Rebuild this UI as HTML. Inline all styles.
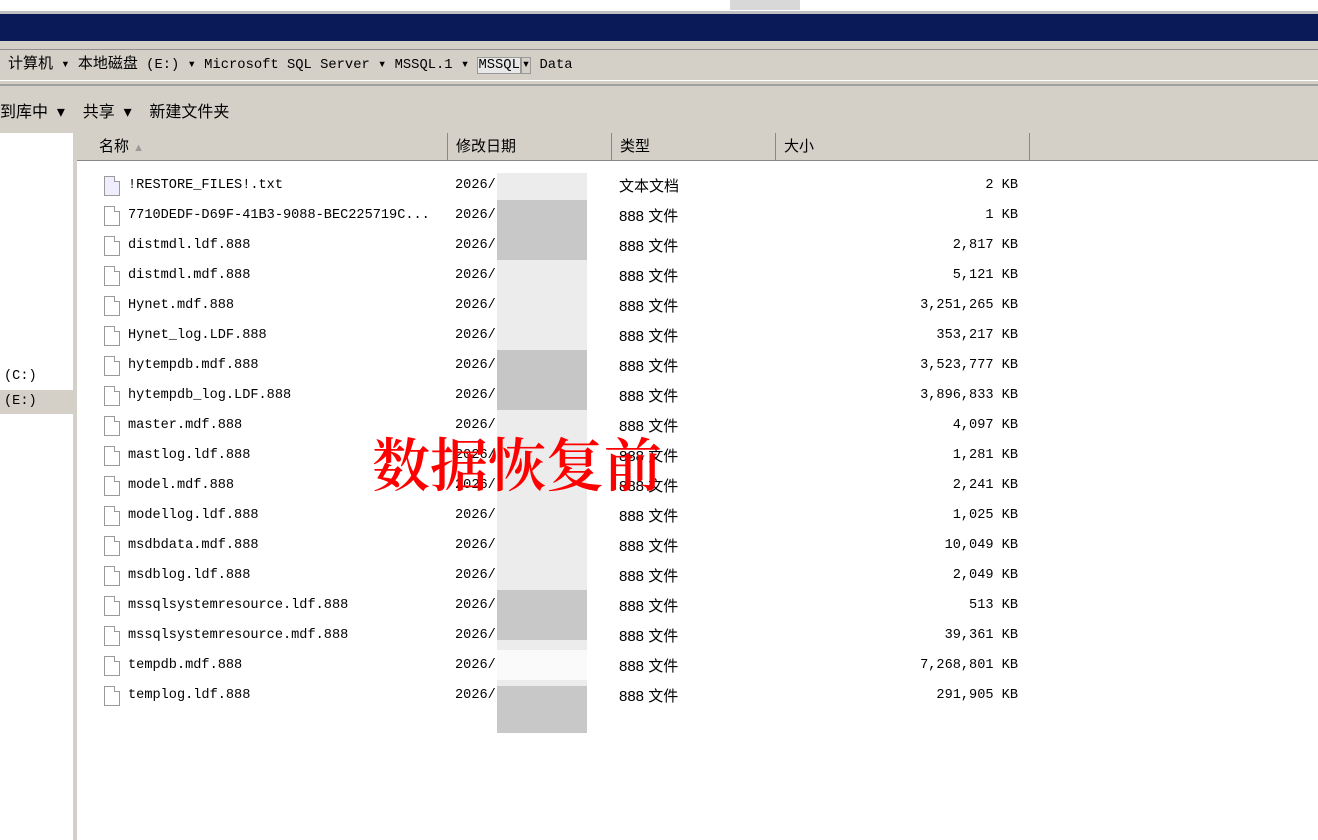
<!DOCTYPE html>
<html><head><meta charset="utf-8"><style>
body{margin:0;width:1318px;height:840px;overflow:hidden;background:#fff;position:relative;font-family:"Liberation Mono","Noto Sans CJK SC",monospace;font-size:13.6px;color:#000}
.a{position:absolute}
.cj{font-family:"Liberation Sans","Noto Sans CJK SC",sans-serif}
.row{position:absolute;left:0;width:1318px;height:30px}
.ic{position:absolute;left:104px;top:5px;width:14px;height:18px;border:1px solid #9a9a9a;background:#fff}
.ic:after{content:"";position:absolute;right:-1px;top:-1px;width:5px;height:5px;background:#fff;border-left:1px solid #9a9a9a;border-bottom:1px solid #9a9a9a}
.n{position:absolute;left:128px;top:7px}
.d{position:absolute;left:455px;top:7px}
.t{position:absolute;left:619px;top:4px;font-family:"Liberation Sans","Noto Sans CJK SC",sans-serif;font-size:15px}
.s{position:absolute;right:300px;top:7px}
.hd{position:absolute;top:133px;height:28px;background:#d4d0c8;border-right:1px solid #888;border-bottom:1px solid #888;font-family:"Liberation Sans","Noto Sans CJK SC",sans-serif;font-size:15px;line-height:28px;padding-left:8px;box-sizing:border-box}
</style></head><body>
<div class="a" style="left:0;top:0;width:1318px;height:11px;background:#fff"></div>
<div class="a" style="left:730px;top:0;width:70px;height:10px;background:#d8d8d8"></div>
<div class="a" style="left:0;top:11px;width:1318px;height:3px;background:#c0c0c0"></div>
<div class="a" style="left:0;top:14px;width:1318px;height:27px;background:#0a1a58"></div>
<div class="a" style="left:0;top:41px;width:1318px;height:92px;background:#d4d0c8"></div>
<div class="a" style="left:0;top:49px;width:1318px;height:30px;border-top:1px solid #909090;border-bottom:1px solid #fff;background:#d4d0c8"></div>
<div class="a" style="left:0;top:84px;width:1318px;height:2px;background:#a0a0a0"></div>
<div class="a" style="left:8px;top:52px;font-size:13.8px"><span class="cj" style="font-size:15px">计算机</span> ▾ <span class="cj" style="font-size:15px">本地磁盘</span> (E:) ▾ Microsoft SQL Server ▾ MSSQL.1 ▾ <span style="background:#e8e8e8;border:1px solid #999">MSSQL</span><span style="border:1px solid #999">▾</span> Data</div>
<div class="a cj" style="left:0;top:98px;font-size:16px">到库中 &nbsp;▾ &nbsp;&nbsp;&nbsp;共享 &nbsp;▾ &nbsp;&nbsp;&nbsp;新建文件夹</div>
<div class="a" style="left:0;top:133px;width:73px;height:707px;background:#fff"></div>
<div class="a" style="left:73px;top:133px;width:4px;height:707px;background:#d4d0c8"></div>
<div class="a" style="left:0;top:390px;width:73px;height:24px;background:#d4d0c8"></div>
<div class="a" style="left:4px;top:369px">(C:)</div>
<div class="a" style="left:4px;top:394px">(E:)</div>
<div class="hd" style="left:77px;width:371px;padding-left:22px">名称 <span style="color:#999;font-size:11px">▲</span></div>
<div class="hd" style="left:448px;width:164px">修改日期</div>
<div class="hd" style="left:612px;width:164px">类型</div>
<div class="hd" style="left:776px;width:254px">大小</div>
<div class="hd" style="left:1030px;width:288px;border-right:0"></div>
<div class="a" style="left:497px;top:173px;width:90px;height:560px;background:#ececec"></div>
<div class="a" style="left:497px;top:200px;width:90px;height:60px;background:#c8c8c8"></div>
<div class="a" style="left:497px;top:350px;width:90px;height:60px;background:#c6c6c6"></div>
<div class="a" style="left:497px;top:590px;width:90px;height:50px;background:#c8c8c8"></div>
<div class="a" style="left:497px;top:650px;width:90px;height:30px;background:#fafafa"></div>
<div class="a" style="left:497px;top:686px;width:90px;height:47px;background:#c8c8c8"></div>
<div class="row" style="top:171px"><div class="ic" style="background:#eef"></div><div class="n">!RESTORE_FILES!.txt</div><div class="d">2026/</div><div class="t">文本文档</div><div class="s">2 KB</div></div>
<div class="row" style="top:201px"><div class="ic"></div><div class="n">7710DEDF-D69F-41B3-9088-BEC225719C...</div><div class="d">2026/</div><div class="t">888 文件</div><div class="s">1 KB</div></div>
<div class="row" style="top:231px"><div class="ic"></div><div class="n">distmdl.ldf.888</div><div class="d">2026/</div><div class="t">888 文件</div><div class="s">2,817 KB</div></div>
<div class="row" style="top:261px"><div class="ic"></div><div class="n">distmdl.mdf.888</div><div class="d">2026/</div><div class="t">888 文件</div><div class="s">5,121 KB</div></div>
<div class="row" style="top:291px"><div class="ic"></div><div class="n">Hynet.mdf.888</div><div class="d">2026/</div><div class="t">888 文件</div><div class="s">3,251,265 KB</div></div>
<div class="row" style="top:321px"><div class="ic"></div><div class="n">Hynet_log.LDF.888</div><div class="d">2026/</div><div class="t">888 文件</div><div class="s">353,217 KB</div></div>
<div class="row" style="top:351px"><div class="ic"></div><div class="n">hytempdb.mdf.888</div><div class="d">2026/</div><div class="t">888 文件</div><div class="s">3,523,777 KB</div></div>
<div class="row" style="top:381px"><div class="ic"></div><div class="n">hytempdb_log.LDF.888</div><div class="d">2026/</div><div class="t">888 文件</div><div class="s">3,896,833 KB</div></div>
<div class="row" style="top:411px"><div class="ic"></div><div class="n">master.mdf.888</div><div class="d">2026/</div><div class="t">888 文件</div><div class="s">4,097 KB</div></div>
<div class="row" style="top:441px"><div class="ic"></div><div class="n">mastlog.ldf.888</div><div class="d">2026/</div><div class="t">888 文件</div><div class="s">1,281 KB</div></div>
<div class="row" style="top:471px"><div class="ic"></div><div class="n">model.mdf.888</div><div class="d">2026/</div><div class="t">888 文件</div><div class="s">2,241 KB</div></div>
<div class="row" style="top:501px"><div class="ic"></div><div class="n">modellog.ldf.888</div><div class="d">2026/</div><div class="t">888 文件</div><div class="s">1,025 KB</div></div>
<div class="row" style="top:531px"><div class="ic"></div><div class="n">msdbdata.mdf.888</div><div class="d">2026/</div><div class="t">888 文件</div><div class="s">10,049 KB</div></div>
<div class="row" style="top:561px"><div class="ic"></div><div class="n">msdblog.ldf.888</div><div class="d">2026/</div><div class="t">888 文件</div><div class="s">2,049 KB</div></div>
<div class="row" style="top:591px"><div class="ic"></div><div class="n">mssqlsystemresource.ldf.888</div><div class="d">2026/</div><div class="t">888 文件</div><div class="s">513 KB</div></div>
<div class="row" style="top:621px"><div class="ic"></div><div class="n">mssqlsystemresource.mdf.888</div><div class="d">2026/</div><div class="t">888 文件</div><div class="s">39,361 KB</div></div>
<div class="row" style="top:651px"><div class="ic"></div><div class="n">tempdb.mdf.888</div><div class="d">2026/</div><div class="t">888 文件</div><div class="s">7,268,801 KB</div></div>
<div class="row" style="top:681px"><div class="ic"></div><div class="n">templog.ldf.888</div><div class="d">2026/</div><div class="t">888 文件</div><div class="s">291,905 KB</div></div>
<div class="a" style="left:372px;top:424px;font-family:'Noto Serif CJK SC','Liberation Serif',serif;font-size:58px;line-height:74px;color:#f00;font-weight:600">数据恢复前</div>
</body></html>
